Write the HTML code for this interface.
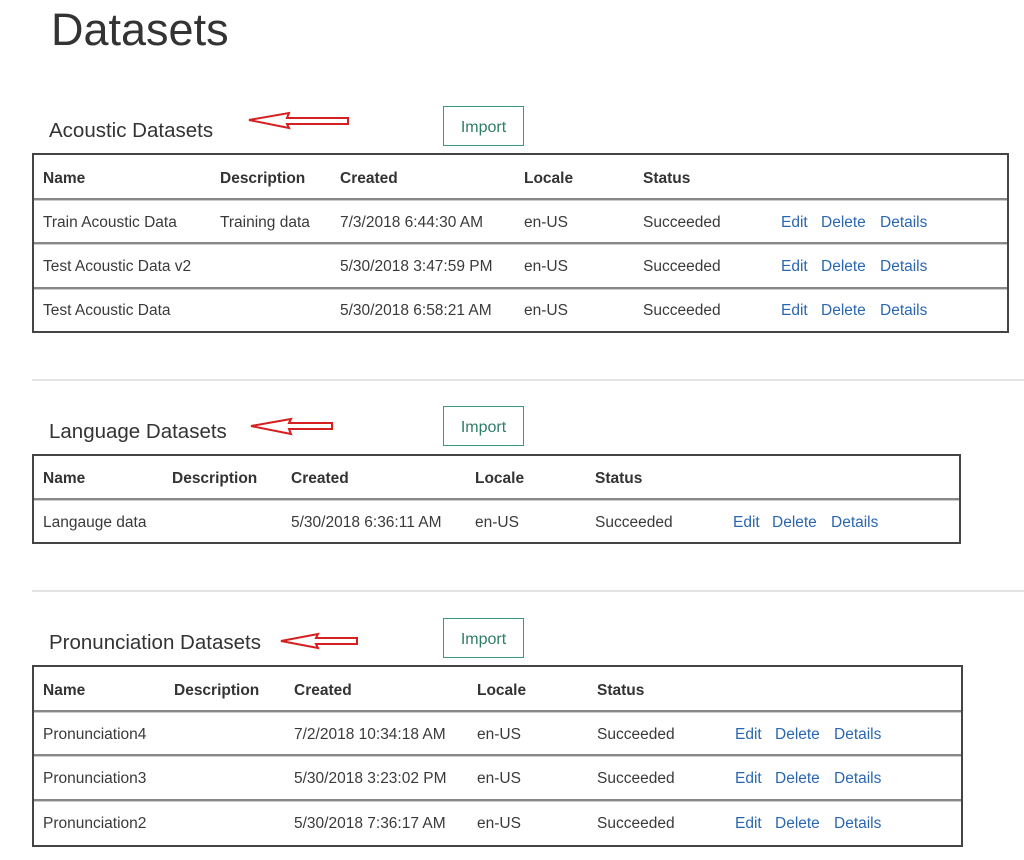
<!DOCTYPE html>
<html><head><meta charset="utf-8"><style>
body{margin:0;width:1024px;height:860px;background:#fff;position:relative;overflow:hidden;font-family:"Liberation Sans",sans-serif;color:#3a3a3a}
.a{position:absolute;white-space:nowrap}
h1{position:absolute;left:51px;top:4px;margin:0;font-size:45px;font-weight:normal;color:#333}
.t{font-size:20.5px;color:#333}
.btn{position:absolute;width:79px;height:38px;border:1.5px solid #3a9a83;color:#2e7d68;font-size:16px;text-align:center;line-height:41px}
.tbl{position:absolute;border:2px solid #444;box-sizing:border-box}
.ln{position:absolute;left:0;right:0;height:2px;background:#888;border-bottom:1px solid #ccc}
.h{font-size:15.5px;font-weight:bold;color:#333}
.c{font-size:15.5px;color:#3a3a3a}
.l{font-size:15.5px;color:#2a67b0}
.sep{position:absolute;left:32px;right:0;height:2px;background:#e3e3e3}
</style></head><body>
<h1>Datasets</h1>

<div class="a t" style="left:49px;top:119px">Acoustic Datasets</div>
<svg class="a" style="left:244px;top:110px" width="110" height="22"><path d="M5 10 L45 3 L43 8 L104 8 L104 14 L43 14 L45 18 Z" fill="none" stroke="#d61f1f" stroke-width="2"/></svg>
<div class="btn" style="left:443px;top:106px">Import</div>
<div class="tbl" style="left:32px;top:153px;width:977px;height:180px">
<div class="ln" style="top:43px"></div><div class="ln" style="top:87px"></div><div class="ln" style="top:132px"></div>
</div>
<div class="a h" style="left:43px;top:170px">Name</div><div class="a h" style="left:220px;top:170px">Description</div><div class="a h" style="left:340px;top:170px">Created</div><div class="a h" style="left:524px;top:170px">Locale</div><div class="a h" style="left:643px;top:170px">Status</div>
<div class="a c" style="left:43px;top:214px">Train Acoustic Data</div><div class="a c" style="left:220px;top:214px">Training data</div><div class="a c" style="left:340px;top:214px">7/3/2018 6:44:30 AM</div><div class="a c" style="left:524px;top:214px">en-US</div><div class="a c" style="left:643px;top:214px">Succeeded</div><div class="a l" style="left:781px;top:214px">Edit</div><div class="a l" style="left:821px;top:214px">Delete</div><div class="a l" style="left:880px;top:214px">Details</div>
<div class="a c" style="left:43px;top:258px">Test Acoustic Data v2</div><div class="a c" style="left:340px;top:258px">5/30/2018 3:47:59 PM</div><div class="a c" style="left:524px;top:258px">en-US</div><div class="a c" style="left:643px;top:258px">Succeeded</div><div class="a l" style="left:781px;top:258px">Edit</div><div class="a l" style="left:821px;top:258px">Delete</div><div class="a l" style="left:880px;top:258px">Details</div>
<div class="a c" style="left:43px;top:302px">Test Acoustic Data</div><div class="a c" style="left:340px;top:302px">5/30/2018 6:58:21 AM</div><div class="a c" style="left:524px;top:302px">en-US</div><div class="a c" style="left:643px;top:302px">Succeeded</div><div class="a l" style="left:781px;top:302px">Edit</div><div class="a l" style="left:821px;top:302px">Delete</div><div class="a l" style="left:880px;top:302px">Details</div>

<div class="sep" style="top:379px"></div>

<div class="a t" style="left:49px;top:420px">Language Datasets</div>
<svg class="a" style="left:246px;top:415px" width="92" height="22"><path d="M5 11 L45 4 L43 8 L86 8 L86 14 L43 14 L45 19 Z" fill="none" stroke="#d61f1f" stroke-width="2"/></svg>
<div class="btn" style="left:443px;top:406px">Import</div>
<div class="tbl" style="left:32px;top:454px;width:929px;height:90px">
<div class="ln" style="top:42px"></div>
</div>
<div class="a h" style="left:43px;top:470px">Name</div><div class="a h" style="left:172px;top:470px">Description</div><div class="a h" style="left:291px;top:470px">Created</div><div class="a h" style="left:475px;top:470px">Locale</div><div class="a h" style="left:595px;top:470px">Status</div>
<div class="a c" style="left:43px;top:514px">Langauge data</div><div class="a c" style="left:291px;top:514px">5/30/2018 6:36:11 AM</div><div class="a c" style="left:475px;top:514px">en-US</div><div class="a c" style="left:595px;top:514px">Succeeded</div><div class="a l" style="left:733px;top:514px">Edit</div><div class="a l" style="left:772px;top:514px">Delete</div><div class="a l" style="left:831px;top:514px">Details</div>

<div class="sep" style="top:590px"></div>

<div class="a t" style="left:49px;top:631px">Pronunciation Datasets</div>
<svg class="a" style="left:276px;top:631px" width="86" height="22"><path d="M5 10 L42 3 L40 7 L81 7 L81 13 L40 13 L42 17 Z" fill="none" stroke="#d61f1f" stroke-width="2"/></svg>
<div class="btn" style="left:443px;top:618px">Import</div>
<div class="tbl" style="left:32px;top:665px;width:931px;height:182px">
<div class="ln" style="top:43px"></div><div class="ln" style="top:87px"></div><div class="ln" style="top:132px"></div>
</div>
<div class="a h" style="left:43px;top:682px">Name</div><div class="a h" style="left:174px;top:682px">Description</div><div class="a h" style="left:294px;top:682px">Created</div><div class="a h" style="left:477px;top:682px">Locale</div><div class="a h" style="left:597px;top:682px">Status</div>
<div class="a c" style="left:43px;top:726px">Pronunciation4</div><div class="a c" style="left:294px;top:726px">7/2/2018 10:34:18 AM</div><div class="a c" style="left:477px;top:726px">en-US</div><div class="a c" style="left:597px;top:726px">Succeeded</div><div class="a l" style="left:735px;top:726px">Edit</div><div class="a l" style="left:775px;top:726px">Delete</div><div class="a l" style="left:834px;top:726px">Details</div>
<div class="a c" style="left:43px;top:770px">Pronunciation3</div><div class="a c" style="left:294px;top:770px">5/30/2018 3:23:02 PM</div><div class="a c" style="left:477px;top:770px">en-US</div><div class="a c" style="left:597px;top:770px">Succeeded</div><div class="a l" style="left:735px;top:770px">Edit</div><div class="a l" style="left:775px;top:770px">Delete</div><div class="a l" style="left:834px;top:770px">Details</div>
<div class="a c" style="left:43px;top:815px">Pronunciation2</div><div class="a c" style="left:294px;top:815px">5/30/2018 7:36:17 AM</div><div class="a c" style="left:477px;top:815px">en-US</div><div class="a c" style="left:597px;top:815px">Succeeded</div><div class="a l" style="left:735px;top:815px">Edit</div><div class="a l" style="left:775px;top:815px">Delete</div><div class="a l" style="left:834px;top:815px">Details</div>
</body></html>
